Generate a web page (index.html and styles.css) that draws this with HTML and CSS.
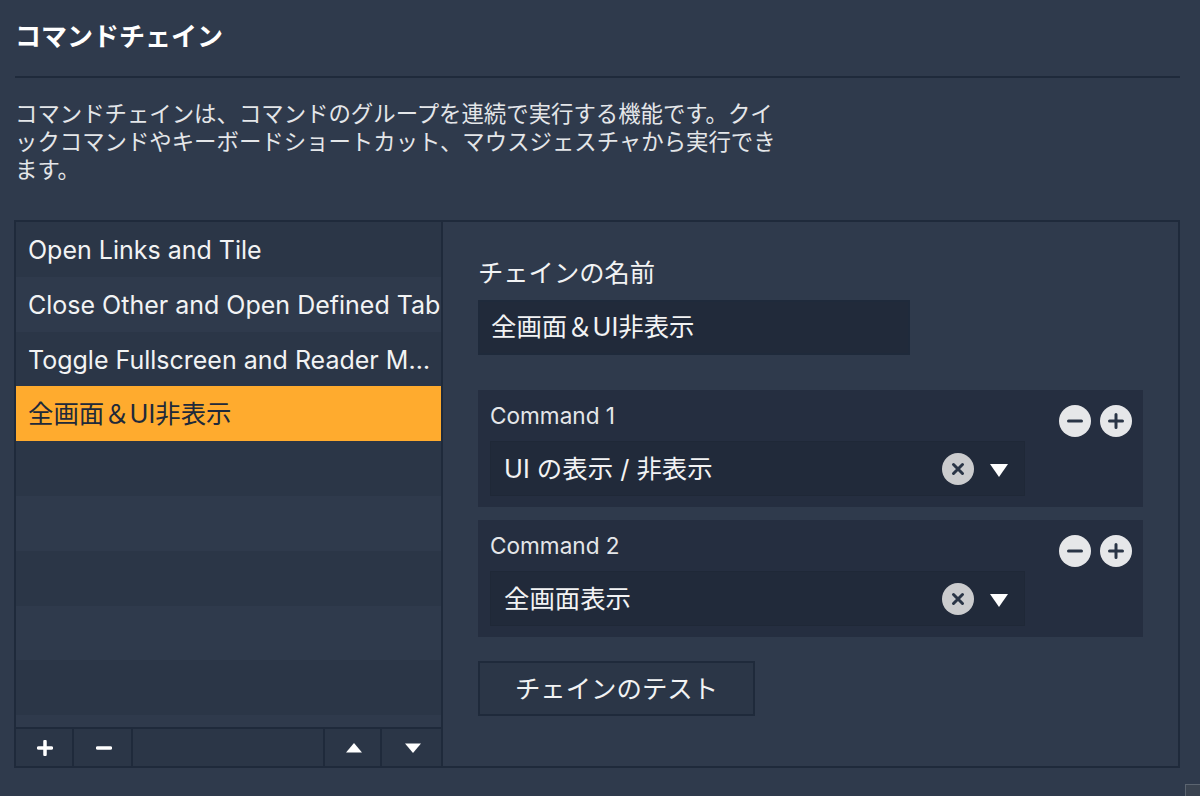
FILE: index.html
```html
<!DOCTYPE html>
<html lang="ja">
<head>
    <meta charset="UTF-8">
    <meta name="viewport" content="width=device-width, initial-scale=1.0">
    <title>コマンドチェイン</title>
    <link rel="stylesheet" href="styles.css">
</head>
<body>
    <div class="page">
        <h1 class="title">コマンドチェイン</h1>
        <p class="desc">コマンドチェインは、コマンドのグループを連続で実行する機能です。クイックコマンドやキーボードショートカット、マウスジェスチャから実行できます。</p>

        <div class="panel">
            <!-- left side: chain list -->
            <div class="side">
                <div class="list">
                    <div class="row">Open Links and Tile</div>
                    <div class="row">Close Other and Open Defined Tab</div>
                    <div class="row">Toggle Fullscreen and Reader Mode</div>
                    <div class="row active">全画面＆UI非表示</div>
                    <div class="row"></div>
                    <div class="row"></div>
                    <div class="row"></div>
                    <div class="row"></div>
                    <div class="row"></div>
                </div>
                <div class="toolbar">
                    <button class="tool tool-add" aria-label="add">
                        <svg width="16" height="16" viewBox="0 0 16 16"><path d="M8 1.500v13M1.500 8h13" class="tool-line"/></svg>
                    </button>
                    <button class="tool tool-remove" aria-label="remove">
                        <svg width="16" height="16" viewBox="0 0 16 16"><path d="M1.500 8h13" class="tool-line"/></svg>
                    </button>
                    <div class="tool-space"></div>
                    <button class="tool tool-up" aria-label="up">
                        <svg width="16" height="10" viewBox="0 0 16 10"><path d="M8 0L16 9.500H0z" fill="#fff"/></svg>
                    </button>
                    <button class="tool tool-down" aria-label="down">
                        <svg width="16" height="10" viewBox="0 0 16 10"><path d="M8 10L16 .5H0z" fill="#fff"/></svg>
                    </button>
                </div>
            </div>

            <!-- right side: chain detail -->
            <div class="detail">
                <label class="name-label">チェインの名前</label>
                <div class="name-input">全画面＆UI非表示</div>

                <div class="command">
                    <div class="command-main">
                        <div class="command-label">Command 1</div>
                        <div class="select">
                            <span class="select-text">UI の表示 / 非表示</span>
                            <svg class="clear" width="32" height="32" viewBox="0 0 32 32"><circle cx="16" cy="16" r="16" fill="#cbccce"/><path d="M11.500 11.500l9 9M20.500 11.500l-9 9" class="glyph"/></svg>
                            <svg class="arrow" width="18" height="13" viewBox="0 0 18 13"><path d="M9 13L18 0H0z" fill="#fff"/></svg>
                        </div>
                    </div>
                    <div class="command-btns">
                        <svg width="32" height="32" viewBox="0 0 32 32"><circle cx="16" cy="16" r="16" fill="#e6e7e9"/><path d="M9.500 16h13" class="glyph"/></svg>
                        <svg width="32" height="32" viewBox="0 0 32 32"><circle cx="16" cy="16" r="16" fill="#e6e7e9"/><path d="M9.500 16h13M16 9.500v13" class="glyph"/></svg>
                    </div>
                </div>

                <div class="command">
                    <div class="command-main">
                        <div class="command-label">Command 2</div>
                        <div class="select">
                            <span class="select-text">全画面表示</span>
                            <svg class="clear" width="32" height="32" viewBox="0 0 32 32"><circle cx="16" cy="16" r="16" fill="#cbccce"/><path d="M11.500 11.500l9 9M20.500 11.500l-9 9" class="glyph"/></svg>
                            <svg class="arrow" width="18" height="13" viewBox="0 0 18 13"><path d="M9 13L18 0H0z" fill="#fff"/></svg>
                        </div>
                    </div>
                    <div class="command-btns">
                        <svg width="32" height="32" viewBox="0 0 32 32"><circle cx="16" cy="16" r="16" fill="#e6e7e9"/><path d="M9.500 16h13" class="glyph"/></svg>
                        <svg width="32" height="32" viewBox="0 0 32 32"><circle cx="16" cy="16" r="16" fill="#e6e7e9"/><path d="M9.500 16h13M16 9.500v13" class="glyph"/></svg>
                    </div>
                </div>

                <button class="test-btn">チェインのテスト</button>
            </div>
        </div>
    </div>
    <div class="resizer"></div>
</body>
</html>
```

FILE: styles.css
```css
* {
    box-sizing: border-box;
}
html, body {
    height: 100%;
}
body {
    margin: 0;
    overflow: hidden;
    background-color: #2f3a4c;
    color: #f2f3f4;
    font-family: Inter, "Noto Sans CJK JP", sans-serif;
}
.page {
    padding: 0 20px 0 15px;
}
.title {
    margin: 0;
    height: 78px;
    padding-top: 20px;
    font-size: 26px;
    line-height: 34px;
    font-weight: 700;
    color: #fff;
    border-bottom: 2px solid #1f2a3b;
}
.desc {
    width: 770px;
    margin: 22px 0 0;
    font-size: 22.4px;
    line-height: 28px;
    color: #e4e6e9;
}
.panel {
    display: flex;
    height: 548px;
    margin: 36px 0 0 -1px;
    border: 2px solid #1f2a3b;
}
.side {
    display: flex;
    flex-direction: column;
    width: 427px;
    border-right: 2px solid #1f2a3b;
}
.list {
    flex: 1;
    overflow: hidden;
}
.row {
    height: 54.800px;
    padding: 0 0 0 12px;
    font-size: 25px;
    line-height: 56px;
    white-space: nowrap;
    overflow: hidden;
    text-overflow: ellipsis;
}
.row:nth-child(odd) {
    background-color: #2b3647;
}
.row.active {
    background-color: #ffab2e;
    color: #20293a;
    font-size: 25.400px;
}
.toolbar {
    display: flex;
    height: 39px;
    border-top: 2px solid #1f2a3b;
    background-color: #2b3647;
}
.tool {
    display: flex;
    align-items: center;
    justify-content: center;
    padding: 0 0 0 2px;
    background: none;
    border: none;
    border-right: 2px solid #1f2a3b;
}
.tool-add {
    width: 58px;
}
.tool-remove {
    width: 59px;
}
.tool-space {
    width: 192px;
    border-right: 2px solid #1f2a3b;
}
.tool-up {
    width: 57px;
}
.tool-down {
    flex: 1;
    border-right: none;
}
.tool-line {
    stroke: #fff;
    stroke-width: 3.500;
    stroke-linecap: round;
    fill: none;
}
.detail {
    flex: 1;
    padding: 35px 35px 0 35px;
}
.name-label {
    display: block;
    font-size: 25.300px;
    line-height: 32px;
}
.name-input {
    width: 432px;
    height: 55px;
    margin-top: 11px;
    padding-left: 11px;
    font-size: 25.400px;
    line-height: 50px;
    background-color: #212a3a;
    border: 2px solid #1f2a3b;
}
.command {
    display: flex;
    justify-content: space-between;
    height: 117px;
    margin-top: 13px;
    padding: 12px 12px 0 12px;
    background-color: #252e40;
}
.name-input + .command {
    margin-top: 35px;
}
.command-main {
    width: 535px;
}
.command-label {
    font-size: 22.600px;
    line-height: 28px;
    color: #e4e6e9;
}
.select {
    display: flex;
    align-items: center;
    height: 55px;
    margin-top: 11px;
    padding: 0 16px 0 13px;
    background-color: #212a3a;
    border: 1px solid #1f2837;
}
.select-text {
    flex: 1;
    padding-bottom: 4px;
    font-size: 25.400px;
}
.clear {
    margin-right: 16px;
}
.arrow {
    margin-top: 4px;
}
.glyph {
    stroke: #2a3546;
    stroke-width: 3;
    stroke-linecap: round;
    fill: none;
}
.command-btns {
    display: flex;
    gap: 9px;
    margin-right: -1px;
    padding-top: 3px;
}
.test-btn {
    display: block;
    width: 277px;
    height: 55px;
    margin-top: 24px;
    padding: 0 0 4px;
    font-family: inherit;
    font-size: 25.400px;
    color: #f2f3f4;
    background-color: #2b3647;
    border: 2px solid #1f2a3b;
}
.resizer {
    position: absolute;
    right: 0;
    bottom: 0;
    width: 15px;
    height: 12px;
    border: 1px solid #5b6470;
    border-right: none;
    border-bottom: none;
    background-color: #3a4350;
}
```
